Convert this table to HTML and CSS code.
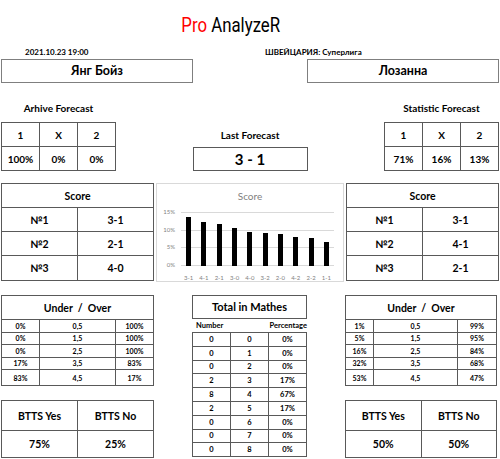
FILE: index.html
```html
<!DOCTYPE html>
<html lang="ru">
<head>
    <meta charset="UTF-8">
    <meta name="viewport" content="width=device-width, initial-scale=1.0">
    <title>Pro AnalyzeR</title>
    <link rel="stylesheet" href="styles.css">
</head>
<body>
    <div class="sheet">
        <h1 class="title"><span class="brand"><span class="pro">Pro</span> AnalyzeR</span></h1>

        <div class="meta">
            <span class="date">2021.10.23 19:00</span>
            <span class="league">ШВЕЙЦАРИЯ: Суперлига</span>
        </div>

        <div class="teams">
            <div class="team">Янг Бойз</div>
            <div class="team">Лозанна</div>
        </div>

        <div class="forecasts">
            <div class="fc">
                <div class="label">Arhive Forecast</div>
                <table class="grid x12">
                    <tr><td>1</td><td>X</td><td>2</td></tr>
                    <tr><td>100%</td><td>0%</td><td>0%</td></tr>
                </table>
            </div>
            <div class="fc fc-last">
                <div class="label">Last Forecast</div>
                <div class="last-box">3 - 1</div>
            </div>
            <div class="fc">
                <div class="label">Statistic Forecast</div>
                <table class="grid x12">
                    <tr><td>1</td><td>X</td><td>2</td></tr>
                    <tr><td>71%</td><td>16%</td><td>13%</td></tr>
                </table>
            </div>
        </div>

        <div class="scores">
            <table class="grid score">
                <tr class="head"><td colspan="2">Score</td></tr>
                <tr><td>№1</td><td>3-1</td></tr>
                <tr><td>№2</td><td>2-1</td></tr>
                <tr class="last"><td>№3</td><td>4-0</td></tr>
            </table>

            <div class="chart">
                <div class="chart-title">Score</div>
                <div class="chart-body">
                    <div class="y-axis">
                        <span>15%</span><span>10%</span><span>5%</span><span>0%</span>
                    </div>
                    <div class="plot">
                        <div class="slot"><div class="bar" style="height:49px"></div></div>
                        <div class="slot"><div class="bar" style="height:44px"></div></div>
                        <div class="slot"><div class="bar" style="height:42px"></div></div>
                        <div class="slot"><div class="bar" style="height:38px"></div></div>
                        <div class="slot"><div class="bar" style="height:34px"></div></div>
                        <div class="slot"><div class="bar" style="height:33px"></div></div>
                        <div class="slot"><div class="bar" style="height:32px"></div></div>
                        <div class="slot"><div class="bar" style="height:29px"></div></div>
                        <div class="slot"><div class="bar" style="height:28px"></div></div>
                        <div class="slot"><div class="bar" style="height:24px"></div></div>
                    </div>
                </div>
                <div class="x-axis">
                    <span>3-1</span><span>4-1</span><span>2-1</span><span>3-0</span><span>4-0</span>
                    <span>3-2</span><span>2-0</span><span>4-2</span><span>2-2</span><span>1-1</span>
                </div>
            </div>

            <table class="grid score">
                <tr class="head"><td colspan="2">Score</td></tr>
                <tr><td>№1</td><td>3-1</td></tr>
                <tr><td>№2</td><td>4-1</td></tr>
                <tr class="last"><td>№3</td><td>2-1</td></tr>
            </table>
        </div>

        <div class="bottom">
            <div class="side">
                <table class="grid uo uo-left">
                    <colgroup><col class="c1"><col class="c2"><col class="c3"></colgroup>
                    <tr class="head"><td colspan="3">Under  /  Over</td></tr>
                    <tr><td>0%</td><td>0,5</td><td>100%</td></tr>
                    <tr><td>0%</td><td>1,5</td><td>100%</td></tr>
                    <tr><td>0%</td><td>2,5</td><td>100%</td></tr>
                    <tr><td>17%</td><td>3,5</td><td>83%</td></tr>
                    <tr class="last"><td>83%</td><td>4,5</td><td>17%</td></tr>
                </table>
                <table class="grid btts">
                    <tr class="head"><td>BTTS Yes</td><td>BTTS No</td></tr>
                    <tr><td>75%</td><td>25%</td></tr>
                </table>
            </div>

            <div class="totals">
                <div class="totals-title">Total in Mathes</div>
                <div class="totals-head"><span>Number</span><span>Percentage</span></div>
                <table class="grid tm">
                    <tr><td>0</td><td>0</td><td>0%</td></tr>
                    <tr><td>0</td><td>1</td><td>0%</td></tr>
                    <tr><td>0</td><td>2</td><td>0%</td></tr>
                    <tr><td>2</td><td>3</td><td>17%</td></tr>
                    <tr><td>8</td><td>4</td><td>67%</td></tr>
                    <tr><td>2</td><td>5</td><td>17%</td></tr>
                    <tr><td>0</td><td>6</td><td>0%</td></tr>
                    <tr><td>0</td><td>7</td><td>0%</td></tr>
                    <tr><td>0</td><td>8</td><td>0%</td></tr>
                </table>
            </div>

            <div class="side side-right">
                <table class="grid uo uo-right">
                    <colgroup><col class="c1"><col class="c2"><col class="c3"></colgroup>
                    <tr class="head"><td colspan="3">Under  /  Over</td></tr>
                    <tr><td>1%</td><td>0,5</td><td>99%</td></tr>
                    <tr><td>5%</td><td>1,5</td><td>95%</td></tr>
                    <tr><td>16%</td><td>2,5</td><td>84%</td></tr>
                    <tr><td>32%</td><td>3,5</td><td>68%</td></tr>
                    <tr class="last"><td>53%</td><td>4,5</td><td>47%</td></tr>
                </table>
                <table class="grid btts">
                    <tr class="head"><td>BTTS Yes</td><td>BTTS No</td></tr>
                    <tr><td>50%</td><td>50%</td></tr>
                </table>
            </div>
        </div>
    </div>
</body>
</html>
```

FILE: styles.css
```css
body { margin: 0; background: #fff; color: #000; font-family: Lato, "Noto Sans", sans-serif; font-weight: 700; }
.sheet { width: 498px; padding: 0 1px; }

/* header */
.title { margin: 0; height: 45px; box-sizing: border-box; padding: 13px 39px 0 0; text-align: center; font: 400 21px/24px Roboto, sans-serif; }
.brand { display: inline-block; transform: scaleX(0.8); }
.pro { color: #ff0000; }
.meta { display: grid; grid-template-columns: 264px 1fr; height: 14px; font-size: 8px; line-height: 14px; }
.date { padding-left: 24px; }
.teams { display: flex; justify-content: space-between; }
.team { width: 192px; height: 24px; box-sizing: border-box; border: 1px solid #7f7f7f; text-align: center; font-size: 12.5px; line-height: 22px; }

/* tables */
.grid { border-collapse: collapse; table-layout: fixed; }
.grid td { border: 1px solid #595959; padding: 0; text-align: center; white-space: pre; }

/* forecasts */
.forecasts { display: flex; justify-content: space-between; align-items: flex-end; margin-top: 18px; }
.fc { width: 115px; }
.fc .label { font-size: 10px; line-height: 14px; text-align: center; margin-bottom: 7px; white-space: nowrap; }
.fc-last .label { margin-bottom: 5px; }
.x12 { width: 115px; font-size: 10px; }
.x12 td { height: 23px; }
.last-box { height: 24px; box-sizing: border-box; border: 1px solid #595959; text-align: center; font-size: 15px; line-height: 22px; }

/* scores + chart */
.scores { display: flex; justify-content: space-between; align-items: flex-start; margin-top: 12px; }
.score { width: 153px; font-size: 10.5px; }
.score td { height: 23px; }
.score .last td { height: 24px; }
.chart { width: 188px; height: 99px; box-sizing: border-box; border: 1px solid #d9d9d9; color: #7f7f7f; font-weight: 400; }
.chart-title { margin-top: 5px; text-align: center; font-size: 10px; line-height: 14px; }
.chart-body { display: flex; margin-top: 9px; }
.y-axis { width: 18px; height: 63px; margin: -5px 6px 0 0; display: flex; flex-direction: column; justify-content: space-between; text-align: right; font-size: 6px; line-height: 10px; }
.plot { width: 153px; height: 54px; display: flex; align-items: flex-end; background: repeating-linear-gradient(to bottom, #d9d9d9 0 1px, transparent 1px 17.67px); }
.slot { flex: 1; display: flex; justify-content: center; }
.bar { width: 5px; background: #000; }
.x-axis { display: flex; width: 153px; margin: 3px 0 0 24px; font-size: 6px; line-height: 10px; }
.x-axis span { flex: 1; text-align: center; }

/* bottom */
.bottom { display: flex; justify-content: space-between; align-items: flex-start; margin-top: 13px; }
.side { width: 153px; }
.side-right { width: 152px; margin-right: 2px; }
.uo { width: 100%; font-size: 7px; }
.uo td { height: 11.5px; }
.uo .head td { height: 23px; font-size: 10.5px; }
.uo .last td { height: 15px; }
.uo-left .c1, .uo-left .c3 { width: 38px; }
.uo-right .c1 { width: 28px; }
.uo-right .c3 { width: 39px; }
.btts { width: 100%; margin-top: 14px; font-size: 10.5px; }
.btts td { height: 26px; }
.btts .head td { height: 29px; }

.totals { width: 115px; }
.totals-title { height: 24px; box-sizing: border-box; border: 1px solid #595959; text-align: center; font-size: 11px; line-height: 22px; }
.totals-head { display: flex; justify-content: space-between; height: 13px; padding-left: 4px; font-size: 7.5px; line-height: 13px; }
.tm { width: 115px; font-size: 7.5px; }
.tm td { height: 12.8px; }
```
